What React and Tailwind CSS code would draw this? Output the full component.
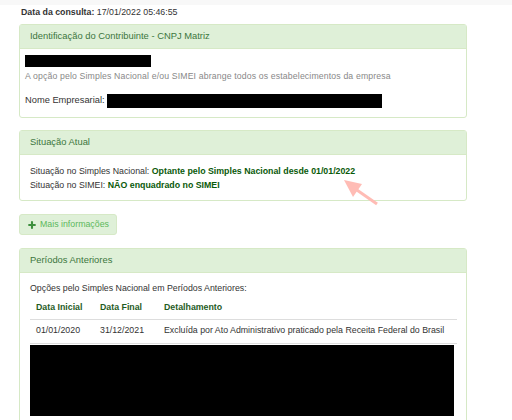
import { Plus } from 'lucide-react';

const font = { fontFamily: '"Liberation Sans", Arial, sans-serif' };

function Panel({ title, children, className = '' }) {
  return (
    <div className={`border border-[#d6e9c6] rounded-[3px] bg-white ${className}`}>
      <div className="h-[24px] bg-[#dff0d8] border-b border-[#d6e9c6] px-[10px] flex items-center text-[9.4px] text-[#3c763d]">
        {title}
      </div>
      {children}
    </div>
  );
}

export default function App() {
  return (
    <div className="w-[512px] h-[420px] overflow-hidden bg-white text-[#333]" style={font}>
      <div className="h-[5px] bg-[#f8f8f8]" />
      <div className="pl-[19px] w-[467px]">
        <div className="h-[19px] pt-[2px] leading-[11px] text-[8.8px] pl-[2px]">
          <b>Data da consulta:</b> 17/01/2022 05:46:55
        </div>

        {/* Identificação */}
        <Panel title="Identificação do Contribuinte - CNPJ Matriz">
          <div className="px-[5px] pt-[6px] pb-[9px]">
            <div className="w-[126px] h-[12px] bg-black" />
            <div className="text-[8.7px] text-[#888] leading-[11px] mt-[4px] tracking-[0.15px]">
              A opção pelo Simples Nacional e/ou SIMEI abrange todos os estabelecimentos da empresa
            </div>
            <div className="flex items-center mt-[12px] text-[9.3px]">
              <span>Nome Empresarial:</span>
              <div className="w-[275px] h-[14px] bg-black ml-[2px]" />
            </div>
          </div>
        </Panel>

        {/* Situação */}
        <Panel title="Situação Atual" className="mt-[12px]">
          <div className="px-[10px] pt-[9px] pb-[8px] text-[8.8px] leading-[14px]">
            <div>
              Situação no Simples Nacional:{' '}
              <b className="text-[#0a5a0a]">Optante pelo Simples Nacional desde 01/01/2022</b>
            </div>
            <div>
              Situação no SIMEI: <b className="text-[#0a5a0a]">NÃO enquadrado no SIMEI</b>
            </div>
          </div>
        </Panel>

        <div className="relative">
          <svg className="absolute left-[305px] top-[-24px]" width="60" height="34" viewBox="0 0 60 34">
            <line x1="53" y1="27" x2="30" y2="11" stroke="#ffbcb5" strokeWidth="3" />
            <polygon points="20,3 38,7 29,20" fill="#ffbcb5" />
          </svg>
        </div>

        <button className="mt-[13px] h-[21px] w-[98px] rounded-[3px] bg-[#dff0d8] border border-[#d6e9c6] flex items-center gap-[3px] pl-[7px] text-[8.8px] text-[#5cb85c]">
          <Plus className="w-[10px] h-[10px] text-[#3d8f3d]" strokeWidth={5} />
          Mais informações
        </button>

        {/* Períodos */}
        <Panel title="Períodos Anteriores" className="mt-[13px] h-[200px] rounded-b-none">
          <div className="px-[10px] pt-[8px] text-[8.8px]">
            <div className="leading-[14px]">Opções pelo Simples Nacional em Períodos Anteriores:</div>
            <table className="w-[427px] mt-[2px] border-collapse whitespace-nowrap">
              <thead>
                <tr className="h-[22px] border-b border-[#ddd] text-left text-[#1f5c1f]">
                  <th className="pl-[6px] w-[64px] font-bold">Data Inicial</th>
                  <th className="pl-[6px] w-[64px] font-bold">Data Final</th>
                  <th className="pl-[6px] font-bold">Detalhamento</th>
                </tr>
              </thead>
              <tbody>
                <tr className="h-[24px] border-b border-[#ddd]">
                  <td className="pl-[6px]">01/01/2020</td>
                  <td className="pl-[6px]">31/12/2021</td>
                  <td className="pl-[6px]">Excluída por Ato Administrativo praticado pela Receita Federal do Brasil</td>
                </tr>
              </tbody>
            </table>
            <div className="w-[424px] h-[71px] bg-black mt-[1px]" />
          </div>
        </Panel>
      </div>
    </div>
  );
}
